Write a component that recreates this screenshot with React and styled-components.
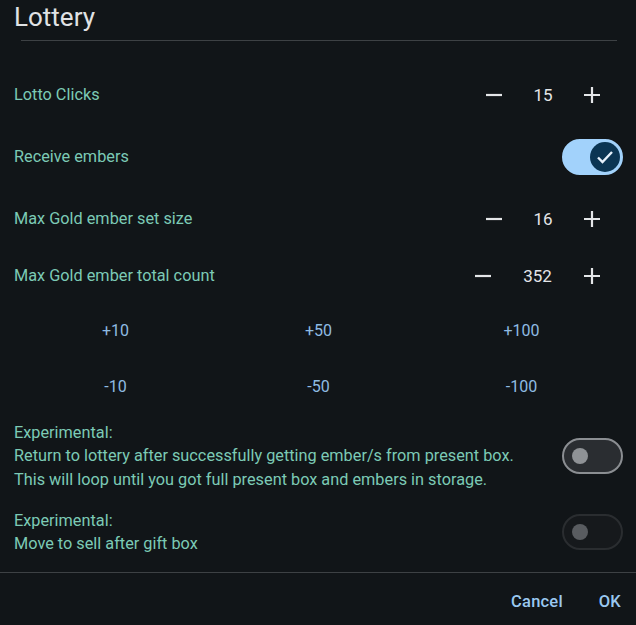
import React, { useState } from 'react';
import styled, { createGlobalStyle } from 'styled-components';

const Global = createGlobalStyle`
  html, body {
    margin: 0;
    padding: 0;
    background: #111518;
  }
  body {
    font-family: Roboto, "Noto Sans", sans-serif;
  }
`;

const Dialog = styled.div`
  width: 636px;
  height: 625px;
  background: #111518;
  display: flex;
  flex-direction: column;
  overflow: hidden;
`;

const Header = styled.div`
  padding: 1px 0 0 14px;
  height: 40px;
  box-sizing: border-box;
`;

const Title = styled.h1`
  margin: 0;
  font-size: 26px;
  font-weight: 400;
  line-height: 33px;
  color: #e0e2e4;
`;

const Divider = styled.div`
  height: 1px;
  background: #3d4144;
  margin: ${(p) => (p.inset ? '0 19px 0 21px' : '0')};
`;

const Body = styled.div`
  flex: 1;
  padding: 23px 13px 0 14px;
  display: flex;
  flex-direction: column;
`;

const Row = styled.div`
  height: ${(p) => p.h}px;
  flex-shrink: 0;
  display: flex;
  align-items: center;
  justify-content: space-between;
`;

const Label = styled.div`
  font-size: 16.3px;
  color: #7ccab5;
  line-height: 23.5px;
`;

const Stepper = styled.div`
  display: flex;
  align-items: center;
  margin-right: 20px;
`;

const IconBtn = styled.button`
  background: none;
  border: none;
  padding: 0;
  width: 22px;
  height: 22px;
  display: flex;
  align-items: center;
  justify-content: center;
  color: #e4e6e8;
  cursor: pointer;
`;

const Value = styled.div`
  width: ${(p) => p.w}px;
  text-align: center;
  font-size: 17px;
  color: #e4e6e8;
`;

const Track = styled.div`
  width: 61px;
  height: 36px;
  box-sizing: border-box;
  border-radius: 18px;
  position: relative;
  background: ${(p) => (p.on ? '#a2d2fb' : p.disabled ? '#16191c' : '#2a2d31')};
  border: 2px solid ${(p) => (p.on ? '#a2d2fb' : p.disabled ? '#2a2d30' : '#8b8e92')};
`;

const Thumb = styled.div`
  position: absolute;
  top: 50%;
  transform: translateY(-50%);
  left: ${(p) => (p.on ? '26px' : '8px')};
  width: ${(p) => (p.on ? '30px' : '16px')};
  height: ${(p) => (p.on ? '30px' : '16px')};
  border-radius: 50%;
  background: ${(p) => (p.on ? '#0b3553' : p.disabled ? '#595c60' : '#8f9296')};
  display: flex;
  align-items: center;
  justify-content: center;
`;

const Grid = styled.div`
  display: grid;
  grid-template-columns: repeat(3, 1fr);
  grid-auto-rows: 56px;
  align-items: center;
  justify-items: center;
  flex-shrink: 0;
`;

const Chip = styled.button`
  background: none;
  border: none;
  font-family: inherit;
  font-size: 16px;
  color: #8fbbe2;
  cursor: pointer;
`;

const Footer = styled.div`
  height: 52px;
  display: flex;
  justify-content: flex-end;
  align-items: center;
  gap: 36px;
  padding: 4px 15px 0 0;
  box-sizing: border-box;
`;

const TextBtn = styled.button`
  background: none;
  border: none;
  padding: 0;
  font-family: inherit;
  font-weight: 500;
  font-size: 16.5px;
  color: #9ac8f0;
  letter-spacing: 0.2px;
`;

const Minus = () => (
  <svg width="18" height="18" viewBox="0 0 18 18">
    <path d="M1 9h16" stroke="currentColor" strokeWidth="2.2" />
  </svg>
);

const Plus = () => (
  <svg width="18" height="18" viewBox="0 0 18 18">
    <path d="M1 9h16M9 1v16" stroke="currentColor" strokeWidth="2.2" />
  </svg>
);

function Toggle({ on, disabled }) {
  return (
    <Track on={on} disabled={disabled}>
      <Thumb on={on} disabled={disabled}>
        {on && (
          <svg width="20" height="20" viewBox="0 0 20 20">
            <path d="M3 10.5l4.5 4.5 9.5-10" fill="none" stroke="#e6f1fc" strokeWidth="2.4" />
          </svg>
        )}
      </Thumb>
    </Track>
  );
}

function StepRow({ label, value, h, w }) {
  return (
    <Row h={h}>
      <Label>{label}</Label>
      <Stepper>
        <IconBtn><Minus /></IconBtn>
        <Value w={w}>{value}</Value>
        <IconBtn><Plus /></IconBtn>
      </Stepper>
    </Row>
  );
}

export default function App() {
  const [clicks] = useState(15);
  const [setSize] = useState(16);
  const [total] = useState(352);

  return (
    <Dialog>
      <Global />
      <Header>
        <Title>Lottery</Title>
      </Header>
      <Divider inset />
      <Body>
        <StepRow label="Lotto Clicks" value={clicks} h={62} w={76} />
        <Row h={62}>
          <Label>Receive embers</Label>
          <Toggle on />
        </Row>
        <StepRow label="Max Gold ember set size" value={setSize} h={62} w={76} />
        <StepRow label="Max Gold ember total count" value={total} h={52} w={87} />
        <Grid>
          <Chip>+10</Chip>
          <Chip>+50</Chip>
          <Chip>+100</Chip>
          <Chip>-10</Chip>
          <Chip>-50</Chip>
          <Chip>-100</Chip>
        </Grid>
        <Row h={84}>
          <Label>
            Experimental:
            <br />
            Return to lottery after successfully getting ember/s from present box.
            <br />
            This will loop until you got full present box and embers in storage.
          </Label>
          <Toggle />
        </Row>
        <Row h={68}>
          <Label>
            Experimental:
            <br />
            Move to sell after gift box
          </Label>
          <Toggle disabled />
        </Row>
      </Body>
      <Divider />
      <Footer>
        <TextBtn>Cancel</TextBtn>
        <TextBtn>OK</TextBtn>
      </Footer>
    </Dialog>
  );
}
